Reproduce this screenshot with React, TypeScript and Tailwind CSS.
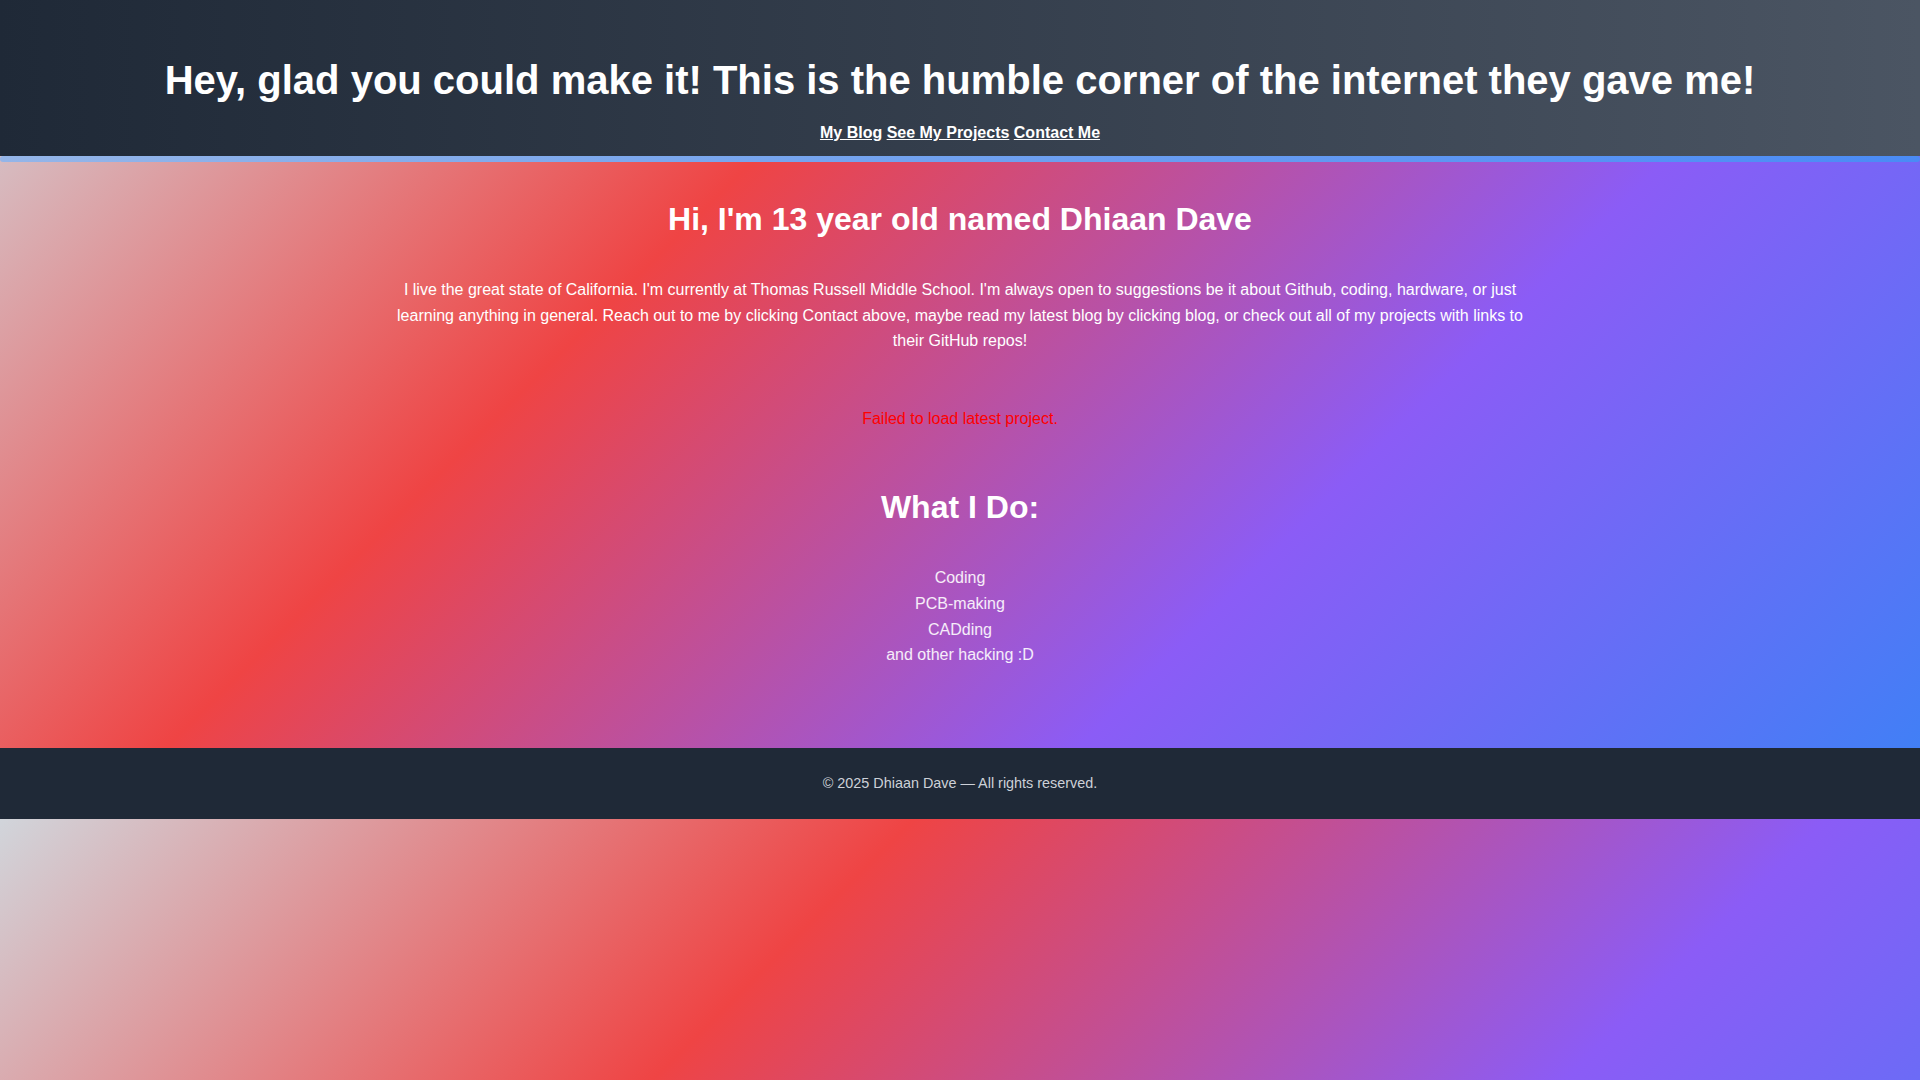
import React, { useLayoutEffect } from 'react';

const skills = ['Coding', 'PCB-making', 'CADding', 'and other hacking :D'];

const App: React.FC = () => {
  // the page gradient sits on body so it repeats below the footer like the original
  useLayoutEffect(() => {
    document.body.className = 'bg-[linear-gradient(135deg,#d1d5db,#ef4444,#8b5cf6,#3b82f6)]';
  }, []);

  return (
    <div className="font-['Liberation_Sans',Arial,sans-serif] text-white">
      {/* Header */}
      <header className="bg-gradient-to-r from-[#1f2937] to-[#4b5563] pt-[57px] pb-[14px] text-center">
        <h1 className="text-[40px] font-bold leading-[46px]">
          Hey, glad you could make it! This is the humble corner of the internet they gave me!
        </h1>
        <nav className="mt-[21px] text-base font-bold leading-[18px]">
          <a href="#blog" className="underline">My Blog</a>{' '}
          <a href="#projects" className="underline">See My Projects</a>{' '}
          <a href="#contact" className="underline">Contact Me</a>
        </nav>
      </header>
      <div className="h-[6px] rounded-sm bg-gradient-to-r from-[#94b5e8] to-[#4a8bf5]"></div>

      {/* Main */}
      <main className="pt-[39px] pb-[80px] text-center">
        <h2 className="text-[32px] font-bold leading-[37px]">Hi, I'm 13 year old named Dhiaan Dave</h2>
        <p className="mx-auto mt-[39px] max-w-[1152px] text-base leading-[1.6]">
          I live the great state of California. I'm currently at Thomas Russell Middle School. I'm always open to suggestions be it about Github, coding, hardware, or just learning anything in general. Reach out to me by clicking Contact above, maybe read my latest blog by clicking blog, or check out all of my projects with links to their GitHub repos!
        </p>
        <p className="mt-[52px] text-base leading-[1.6] text-[#ff0000]">Failed to load latest project.</p>

        <h2 className="mt-[58px] text-[32px] font-bold leading-[37px]">What I Do:</h2>
        <ul className="mt-[39px] text-base leading-[1.6] text-white/90">
          {skills.map(s => (
            <li key={s}>{s}</li>
          ))}
        </ul>
      </main>

      {/* Footer */}
      <footer className="bg-[#1f2937] py-6 text-center text-[14.4px] leading-[1.6] text-[#cdd1d8]">
        © 2025 Dhiaan Dave — All rights reserved.
      </footer>
    </div>
  );
};

export default App;
